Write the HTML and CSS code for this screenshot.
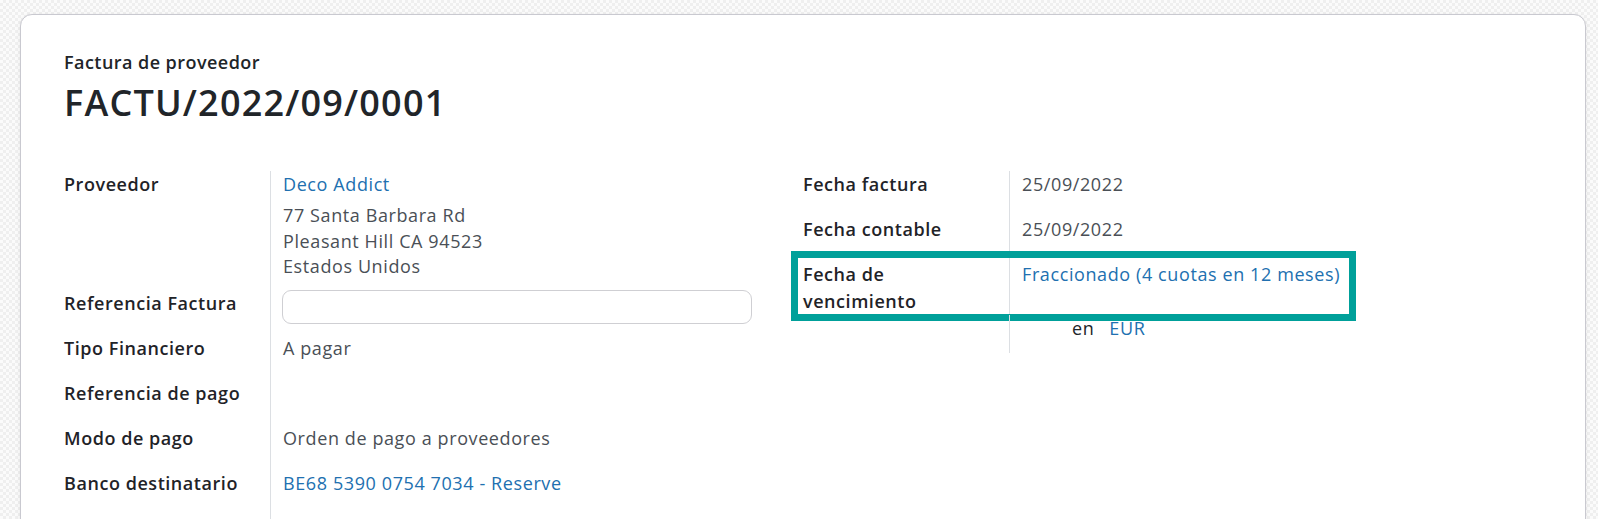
FILE: index.html
```html
<!DOCTYPE html>
<html lang="es">
<head>
<meta charset="utf-8">
<title>FACTU/2022/09/0001</title>
<link rel="stylesheet" href="styles.css">
</head>
<body>
<div class="sheet">
  <div class="subtitle">Factura de proveedor</div>
  <h1 class="title">FACTU/2022/09/0001</h1>
  <div class="groups">
    <div class="group">
      <div class="row row-partner">
        <div class="label">Proveedor</div>
        <div class="value">
          <a class="link">Deco Addict</a>
          <div class="address">77 Santa Barbara Rd<br>Pleasant Hill CA 94523<br>Estados Unidos</div>
        </div>
      </div>
      <div class="row">
        <div class="label">Referencia Factura</div>
        <div class="value"><input class="input" type="text"></div>
      </div>
      <div class="row">
        <div class="label">Tipo Financiero</div>
        <div class="value">A pagar</div>
      </div>
      <div class="row">
        <div class="label">Referencia de pago</div>
        <div class="value"></div>
      </div>
      <div class="row">
        <div class="label">Modo de pago</div>
        <div class="value">Orden de pago a proveedores</div>
      </div>
      <div class="row row-last">
        <div class="label">Banco destinatario</div>
        <div class="value"><a class="link">BE68 5390 0754 7034 - Reserve</a></div>
      </div>
    </div>
    <div class="group">
      <div class="row">
        <div class="label">Fecha factura</div>
        <div class="value">25/09/2022</div>
      </div>
      <div class="row">
        <div class="label">Fecha contable</div>
        <div class="value">25/09/2022</div>
      </div>
      <div class="row row-due">
        <div class="label">Fecha de<br>vencimiento</div>
        <div class="value"><a class="link">Fraccionado (4 cuotas en 12 meses)</a></div>
      </div>
      <div class="row row-currency">
        <div class="label"></div>
        <div class="value"><span class="en">en</span><a class="link">EUR</a></div>
      </div>
    </div>
  </div>
</div>
</body>
</html>
```
FILE: styles.css
```css
html, body {
  margin: 0;
  padding: 0;
}
body {
  width: 1598px;
  height: 519px;
  overflow: hidden;
  font-family: "Open Sans", "DejaVu Sans", sans-serif;
  color: #212529;
  background-color: #f7f7f7;
  background-image: repeating-conic-gradient(#efefef 0 25%, #fbfbfb 0 50%);
  background-size: 6px 6px;
}
.sheet {
  margin: 14px 12px 0 20px;
  padding: 35px 43px 0 43px;
  min-height: 600px;
  background: #fff;
  border: 1px solid #c9c9d0;
  border-radius: 12px;
  box-shadow: 0 1px 4px rgba(0, 0, 0, 0.08);
}
.subtitle {
  font-size: 18px;
  font-weight: 600;
  line-height: 24px;
  letter-spacing: 0.45px;
  color: #212529;
}
.title {
  margin: 7px 0 0;
  font-size: 36px;
  font-weight: 600;
  line-height: 44px;
  color: #212529;
  letter-spacing: 1.2px;
}
.groups {
  margin-top: 46px;
  display: grid;
  grid-template-columns: 1fr 1fr;
}
.row {
  display: grid;
  grid-template-columns: 206px 1fr;
  position: relative;
}
.label {
  font-size: 18px;
  font-weight: 600;
  line-height: 27px;
  letter-spacing: 0.55px;
  min-height: 34px;
  padding-bottom: 11px;
  color: #1f2328;
}
.value {
  border-left: 1px solid #dcdfe3;
  padding: 0 0 11px 12px;
  min-height: 34px;
  font-size: 18px;
  line-height: 27px;
  letter-spacing: 0.6px;
  color: #4a4f56;
}
.link {
  color: #2170b0;
  text-decoration: none;
}
.address {
  margin-top: 5px;
  line-height: 25.5px;
}
.input {
  display: block;
  box-sizing: border-box;
  width: 470px;
  height: 34px;
  margin-left: -1px;
  border: 1px solid #cfcfd3;
  border-radius: 9px;
  background: #fff;
  font: inherit;
}
.row-partner .label,
.row-partner .value {
  padding-bottom: 10px;
}
.row-last .value {
  padding-bottom: 20px;
}
.row-due .label,
.row-due .value {
  padding-bottom: 0;
}
.row-due::after {
  content: "";
  position: absolute;
  left: -12px;
  top: -10px;
  width: 565px;
  height: 70px;
  box-sizing: border-box;
  border: 7px solid #00a09a;
  pointer-events: none;
}
.row-currency .label,
.row-currency .value {
  padding-bottom: 4px;
}
.en {
  margin-left: 50px;
  margin-right: 15px;
  color: #212529;
}
```
